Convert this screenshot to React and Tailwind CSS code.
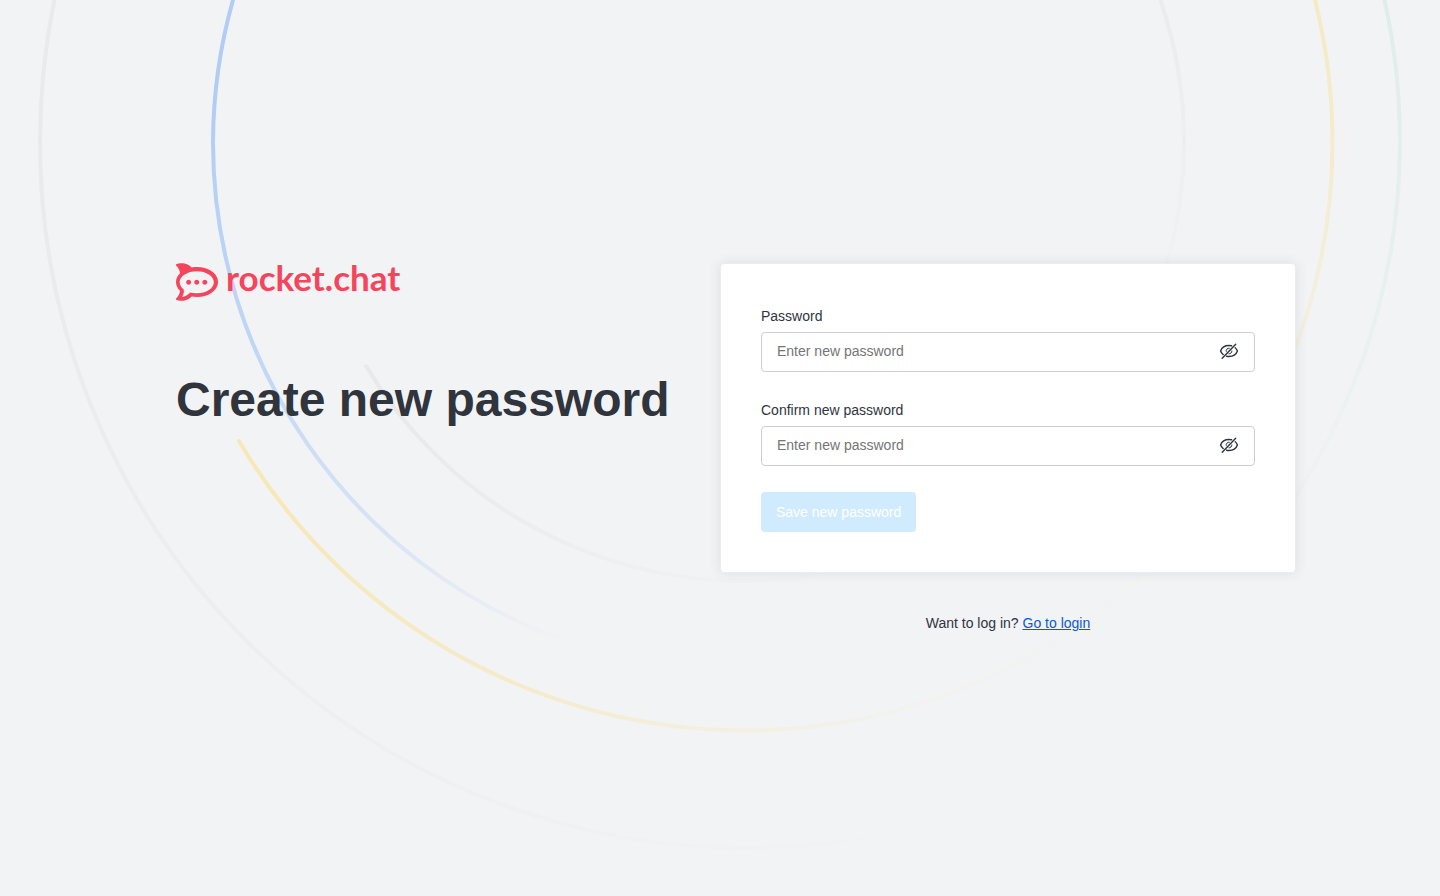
import { useId } from "react";
import { SiRocketdotchat } from "react-icons/si";

function Background() {
  return (
    <svg
      aria-hidden="true"
      className="absolute inset-0 h-full w-full"
      viewBox="0 0 1440 896"
      preserveAspectRatio="xMidYMid slice"
      fill="none"
      strokeWidth="4"
      strokeLinecap="round"
    >
      <defs>
        <linearGradient id="outerGray" gradientUnits="userSpaceOnUse" x1="40" y1="142" x2="680" y2="1062">
          <stop stopColor="#e9eaeb" />
          <stop offset="1" stopColor="#e9eaeb" stopOpacity="0" />
        </linearGradient>
        <linearGradient id="blue" gradientUnits="userSpaceOnUse" x1="0" y1="100" x2="0" y2="642">
          <stop stopColor="#b1cdf6" />
          <stop offset="0.44" stopColor="#b1cdf6" stopOpacity="0.78" />
          <stop offset="0.82" stopColor="#b1cdf6" stopOpacity="0.38" />
          <stop offset="1" stopColor="#b1cdf6" stopOpacity="0" />
        </linearGradient>
        <linearGradient id="yellow" gradientUnits="userSpaceOnUse" x1="343" y1="493" x2="657" y2="945">
          <stop stopColor="#f7e8b8" />
          <stop offset="0.5" stopColor="#f6e8bb" stopOpacity="0.7" />
          <stop offset="1" stopColor="#f6e8bb" stopOpacity="0" />
        </linearGradient>
        <linearGradient id="green" gradientUnits="userSpaceOnUse" x1="1384" y1="0" x2="1250" y2="560">
          <stop stopColor="#dfedea" />
          <stop offset="1" stopColor="#dfedea" stopOpacity="0" />
        </linearGradient>
        <linearGradient id="innerGray" gradientUnits="userSpaceOnUse" x1="320" y1="459" x2="550" y2="789">
          <stop stopColor="#e8e9ea" />
          <stop offset="1" stopColor="#e8e9ea" stopOpacity="0" />
        </linearGradient>
      </defs>
      <path d="M54.4 0A706 706 0 0 0 40 142A706 706 0 0 0 746 848A706 706 0 0 0 950 818" stroke="url(#outerGray)" />
      <path d="M233 0A529 529 0 0 0 213 142A529 529 0 0 0 560 639" stroke="url(#blue)" />
      <path d="M239 441A588 588 0 0 0 744.5 730.5A588 588 0 0 0 1332.5 142A588 588 0 0 0 1315 0" stroke="url(#yellow)" />
      <path d="M1384.5 0A658 658 0 0 1 1400 142A658 658 0 0 1 1250 559" stroke="url(#green)" />
      <path d="M366 366A440 440 0 0 0 744.5 581A440 440 0 0 0 1184 142A440 440 0 0 0 1160.5 0" stroke="url(#innerGray)" />
    </svg>
  );
}

function EyeOffIcon() {
  return (
    <svg
      aria-hidden="true"
      className="size-5"
      viewBox="0 0 20 20"
      fill="none"
      stroke="currentColor"
      strokeWidth="1.4"
      strokeLinecap="round"
    >
      <path d="M16.7 3.3 3.2 17.3" />
      <path d="M12.6 4.8C11.8 4.6 10.9 4.5 10 4.5 5.8 4.5 2.8 6.6 1.6 10c.5 1.5 1.4 2.7 2.6 3.6" />
      <path d="M16.2 6.7c1 .8 1.8 1.9 2.2 3.3-1.2 3.4-4.2 5.5-8.4 5.5-.9 0-1.7-.1-2.5-.3" />
      <path d="M10.7 7.3A2.8 2.8 0 0 0 7.3 10.8" strokeWidth="1" strokeLinecap="butt" />
      <path d="M12.8 9.6a2.8 2.8 0 0 1-3.2 3.2" strokeWidth="1" strokeLinecap="butt" />
    </svg>
  );
}

function PasswordField({ label }) {
  const id = useId();
  return (
    <div className="flex flex-col gap-1">
      <label htmlFor={id} className="text-sm leading-6">
        {label}
      </label>
      <div className="flex h-10 items-center gap-2 rounded border border-[#cbced1] bg-white px-[15px] pb-0.5">
        <input
          id={id}
          type="password"
          placeholder="Enter new password"
          className="h-5 min-w-0 flex-1 bg-transparent text-sm outline-none placeholder:text-[#757575]"
        />
        <button type="button" aria-label="Show password">
          <EyeOffIcon />
        </button>
      </div>
    </div>
  );
}

export default function App() {
  return (
    <div className="relative flex min-h-screen items-center justify-center bg-[#f2f3f5] font-['Liberation_Sans',Arial,sans-serif] text-[#2f343d]">
      <Background />
      <main className="relative grid w-full max-w-6xl grid-cols-2">
        <section className="pl-8">
          <div className="flex h-[37px] items-center gap-2 text-[#f5455c]">
            <SiRocketdotchat className="size-[42px]" aria-hidden="true" />
            <span className="self-start font-[Lato,sans-serif] text-[35px] leading-7 font-bold">rocket.chat</span>
          </div>
          <h1 className="mt-[68px] text-5xl leading-[64px] font-bold whitespace-nowrap">Create new password</h1>
        </section>
        <section>
          <form className="flex flex-col items-start gap-[26px] rounded border border-[#ebecef] bg-white p-10 shadow-[0_0_12px_rgba(47,52,61,0.1)]">
            <div className="flex w-full flex-col gap-[26px]">
              <PasswordField label="Password" />
              <PasswordField label="Confirm new password" />
            </div>
            <button
              type="submit"
              disabled
              className="h-10 rounded bg-[#d1ebfe] px-[15px] text-sm text-white"
            >
              Save new password
            </button>
          </form>
          <p className="mt-10 text-center text-sm">
            Want to log in?{" "}
            <a href="#login" className="text-[#095ad2] underline">
              Go to login
            </a>
          </p>
        </section>
      </main>
    </div>
  );
}
